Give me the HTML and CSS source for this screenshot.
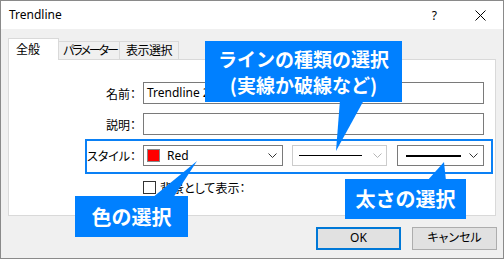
FILE: index.html
```html
<!DOCTYPE html>
<html lang="ja">
<head>
<meta charset="utf-8">
<title>Trendline</title>
<link rel="stylesheet" href="styles.css">
</head>
<body>
<div class="win">
  <div class="titlebar">
    <span class="title">Trendline</span>
    <span class="help">?</span>
    <svg class="close" width="11" height="11" viewBox="0 0 11 11"><path d="M0.5 0.5 L10.5 10.5 M10.5 0.5 L0.5 10.5" stroke="#000" stroke-width="1" fill="none"/></svg>
  </div>
  <div class="body">
    <div class="tabs">
      <div class="tab active">全般</div>
      <div class="tab tab-param">パラメーター</div>
      <div class="tab tab-view">表示選択</div>
    </div>
    <div class="panel">
      <div class="row row-name">
        <span class="label">名前：</span>
        <div class="input">Trendline 2</div>
      </div>
      <div class="row row-desc">
        <span class="label">説明：</span>
        <div class="input"></div>
      </div>
      <div class="row row-style">
        <span class="label">スタイル：</span>
        <div class="combo combo-color">
          <span class="swatch"></span><span class="combo-text">Red</span>
          <svg class="chev" width="9" height="5" viewBox="0 0 9 5"><path d="M0.5 0.5 L4.5 4.5 L8.5 0.5" stroke="#333" fill="none"/></svg>
        </div>
        <div class="combo combo-line disabled">
          <span class="line thin"></span>
          <svg class="chev" width="9" height="5" viewBox="0 0 9 5"><path d="M0.5 0.5 L4.5 4.5 L8.5 0.5" stroke="#b5b5b5" fill="none"/></svg>
        </div>
        <div class="combo combo-width">
          <span class="line thick"></span>
          <svg class="chev" width="9" height="5" viewBox="0 0 9 5"><path d="M0.5 0.5 L4.5 4.5 L8.5 0.5" stroke="#333" fill="none"/></svg>
        </div>
      </div>
      <div class="check-row">
        <span class="checkbox"></span>
        <span class="check-label">背景として表示：</span>
      </div>
    </div>
    <div class="footer">
      <div class="btn default">OK</div>
      <div class="btn">キャンセル</div>
    </div>
  </div>

  <svg class="tails" width="504" height="259" viewBox="0 0 504 259">
    <polygon points="340,100 364,100 336,151" fill="#0080ff"/>
    <polygon points="152,198 173,198 197,161" fill="#0080ff"/>
    <polygon points="427,181 446,181 444,162" fill="#0080ff"/>
  </svg>
  <div class="note note-line">ラインの種類の選択<br>(実線か破線など)</div>
  <div class="note note-color">色の選択</div>
  <div class="note note-width">太さの選択</div>
</div>
</body>
</html>
```

FILE: styles.css
```css
html, body {
  margin: 0;
  padding: 0;
  background: #f0f0f0;
}
body {
  font-family: "Noto Sans", "Noto Sans CJK JP", sans-serif;
  font-size: 12px;
  color: #000;
}
.win {
  position: relative;
  width: 504px;
  height: 259px;
  box-sizing: border-box;
  border: 1px solid #8a8a8a;
  background: #f0f0f0;
  display: flex;
  flex-direction: column;
  overflow: hidden;
}
.titlebar {
  height: 28px;
  background: #fff;
  display: flex;
  align-items: center;
  padding-left: 8px;
  flex: none;
}
.title {
  flex: 1;
  font-size: 12px;
  line-height: 16px;
}
.help {
  font-size: 12px;
  margin-right: 38px;
}
.close {
  margin-right: 17px;
}
.body {
  flex: 1;
  padding: 9px 7px 0 7px;
  display: flex;
  flex-direction: column;
}
.tabs {
  display: flex;
  align-items: flex-end;
  height: 21px;
  position: relative;
  z-index: 2;
}
.tab {
  box-sizing: border-box;
  height: 18px;
  border: 1px solid #d9d9d9;
  border-bottom: none;
  border-left: none;
  line-height: 16px;
  font-family: "Noto Sans CJK JP", sans-serif;
  font-feature-settings: "palt";
  background: #f0f0f0;
  white-space: nowrap;
  overflow: hidden;
}
.tab-param {
  width: 61px;
  padding-left: 4px;
  letter-spacing: -2px;
}
.tab-view {
  width: 59px;
  padding-left: 6px;
  letter-spacing: -0.5px;
}
.tab.active {
  height: 22px;
  width: 51px;
  border-left: 1px solid #d9d9d9;
  background: #fff;
  padding-left: 7px;
  margin-bottom: -1px;
  line-height: 19px;
}
.panel {
  box-sizing: border-box;
  height: 157px;
  background: #fff;
  border: 1px solid #d9d9d9;
  position: relative;
  z-index: 1;
  font-family: "Noto Sans", "Noto Sans CJK JP", sans-serif;
}
.row {
  display: flex;
  align-items: center;
  box-sizing: border-box;
  width: 408px;
  margin-left: 76px;
  border: 2px solid transparent;
  padding-right: 7px;
}
.row-name {
  margin-top: 20px;
}
.row-desc {
  margin-top: 5px;
}
.row-style {
  margin-top: 2px;
  border-color: #0a80f5;
  padding-top: 4px;
  padding-bottom: 6px;
}
.label {
  width: 49px;
  box-sizing: border-box;
  text-align: right;
  margin-right: 7px;
  font-family: "Noto Sans CJK JP", sans-serif;
  font-feature-settings: "palt";
  white-space: nowrap;
}
.input {
  flex: 1;
  box-sizing: border-box;
  height: 22px;
  border: 1px solid #7a7a7a;
  padding-left: 3px;
  line-height: 19px;
}
.combo {
  box-sizing: border-box;
  height: 21px;
  border: 1px solid #7a7a7a;
  display: flex;
  align-items: center;
  background: #fff;
}
.combo-color {
  width: 140px;
  padding: 0 5px 0 3px;
}
.combo-line {
  width: 95px;
  margin-left: 9px;
  border-color: #cccccc;
  padding: 0 4px 0 6px;
}
.combo-width {
  width: 87px;
  margin-left: 10px;
  padding: 0 5px 0 8px;
}
.swatch {
  width: 13px;
  height: 13px;
  box-sizing: border-box;
  border: 1px solid #888;
  background: #ff0000;
}
.combo-text {
  margin-left: 7px;
  flex: 1;
  line-height: 16px;
}
.line {
  flex: 1;
  background: #000;
}
.line.thin {
  height: 1px;
  margin-right: 11px;
}
.line.thick {
  height: 2px;
  margin-right: 8px;
}
.chev {
  flex: none;
}
.check-row {
  display: flex;
  align-items: center;
  margin-top: 7px;
  padding-left: 134px;
  height: 13px;
}
.checkbox {
  width: 13px;
  height: 13px;
  box-sizing: border-box;
  border: 1px solid #333;
  background: #fff;
}
.check-label {
  margin-left: 4px;
  font-family: "Noto Sans CJK JP", sans-serif;
  font-feature-settings: "palt";
  line-height: 14px;
}
.footer {
  display: flex;
  justify-content: flex-end;
  gap: 11px;
  margin-top: 11px;
  margin-right: -1px;
}
.btn {
  box-sizing: border-box;
  width: 85px;
  height: 23px;
  border: 1px solid #adadad;
  background: #e1e1e1;
  text-align: center;
  line-height: 20px;
  font-family: "Noto Sans", "Noto Sans CJK JP", sans-serif;
  font-feature-settings: "palt";
}
.btn.default {
  border: 2px solid #0078d7;
  line-height: 18px;
}
.tails {
  position: absolute;
  left: -1px;
  top: -1px;
  z-index: 5;
  pointer-events: none;
}
.note {
  position: absolute;
  z-index: 6;
  box-sizing: border-box;
  background: #0080ff;
  color: #fff;
  font-family: "Noto Sans CJK JP", sans-serif;
  font-weight: 700;
  text-align: center;
  display: flex;
  align-items: center;
  justify-content: center;
}
.note-line {
  left: 204px;
  top: 40px;
  width: 197px;
  height: 61px;
  font-size: 19px;
  line-height: 26px;
}
.note-color {
  left: 74px;
  top: 195px;
  width: 113px;
  height: 41px;
  font-size: 20px;
  line-height: 24px;
}
.note-width {
  left: 344px;
  top: 178px;
  width: 121px;
  height: 40px;
  font-size: 20px;
  line-height: 24px;
}
```
